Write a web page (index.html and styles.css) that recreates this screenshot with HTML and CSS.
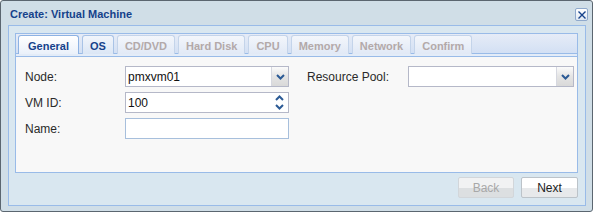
FILE: index.html
```html
<!DOCTYPE html>
<html>
<head>
<meta charset="utf-8">
<link rel="stylesheet" href="styles.css">
</head>
<body>
<div class="win">
  <div class="win-header">
    <span class="win-title">Create: Virtual Machine</span>
    <span class="win-close"><svg width="8" height="8" viewBox="0 0 8 8"><path d="M0.5 0.5 L7.5 7.5 M7.5 0.5 L0.5 7.5" stroke="#15428b" stroke-width="1.4" fill="none"/></svg></span>
  </div>
  <div class="win-body">
    <div class="tabpanel">
      <div class="tabstrip">
        <div class="tab active">General</div>
        <div class="tab">OS</div>
        <div class="tab disabled">CD/DVD</div>
        <div class="tab disabled">Hard Disk</div>
        <div class="tab disabled">CPU</div>
        <div class="tab disabled">Memory</div>
        <div class="tab disabled">Network</div>
        <div class="tab disabled">Confirm</div>
      </div>
      <div class="tab-spacer"></div>
      <div class="panel-body">
        <div class="col col-left">
          <div class="row">
            <label class="lbl">Node:</label>
            <div class="field combo">
              <span class="val">pmxvm01</span>
              <span class="trigger"><svg width="9" height="6" viewBox="0 0 9 6"><polyline points="1,1 4.5,4.5 8,1" stroke="#2b5a95" stroke-width="2" fill="none"/></svg></span>
            </div>
          </div>
          <div class="row">
            <label class="lbl">VM ID:</label>
            <div class="field spinner">
              <span class="val">100</span>
              <span class="spin">
                <svg width="9" height="6" viewBox="0 0 9 6"><polyline points="1,5 4.5,1.5 8,5" stroke="#2b5a95" stroke-width="2" fill="none"/></svg>
                <svg width="9" height="6" viewBox="0 0 9 6"><polyline points="1,1 4.5,4.5 8,1" stroke="#2b5a95" stroke-width="2" fill="none"/></svg>
              </span>
            </div>
          </div>
          <div class="row">
            <label class="lbl">Name:</label>
            <div class="field text"></div>
          </div>
        </div>
        <div class="col col-right">
          <div class="row">
            <label class="lbl lbl-wide">Resource Pool:</label>
            <div class="field combo combo-wide">
              <span class="val"></span>
              <span class="trigger"><svg width="9" height="6" viewBox="0 0 9 6"><polyline points="1,1 4.5,4.5 8,1" stroke="#2b5a95" stroke-width="2" fill="none"/></svg></span>
            </div>
          </div>
        </div>
      </div>
    </div>
    <div class="footer">
      <button class="btn btn-back" disabled>Back</button>
      <button class="btn btn-next">Next</button>
    </div>
  </div>
</div>
</body>
</html>
```
FILE: styles.css
```css
* { box-sizing: border-box; }
html, body { margin: 0; padding: 0; background: #ffffff; }
body { width: 593px; height: 212px; overflow: hidden; font-family: "Liberation Sans", Arial, sans-serif; }

.win {
  width: 593px;
  height: 212px;
  border: 1px solid #5b6670;
  border-radius: 3px;
  background: #d0dee7;
  display: flex;
  flex-direction: column;
}

.win-header {
  height: 24px;
  display: flex;
  align-items: center;
  justify-content: space-between;
  padding: 0 4px 0 9px;
}
.win-title {
  font-weight: bold;
  font-size: 11px;
  color: #15428b;
  padding-top: 2px;
}
.win-close {
  width: 13px;
  height: 13px;
  border: 1px solid #8fa9cc;
  border-radius: 2px;
  background: linear-gradient(#ffffff, #dfe8f3);
  display: flex;
  align-items: center;
  justify-content: center;
  margin-top: 3px;
}

.win-body {
  margin: 0 6px 5px 7px;
  height: 181px;
  border: 1px solid #99bbe8;
  background: #d9e7f0;
  padding: 7px 7px 7px 6px;
  display: flex;
  flex-direction: column;
}

.tabpanel {
  height: 140px;
  border: 1px solid #99bbe8;
  display: flex;
  flex-direction: column;
  background: #f8f8f8;
}

.tabstrip {
  display: flex;
  gap: 3px;
  padding: 1px 2px 0 2px;
  background: linear-gradient(#e6ecf7, #d3e0f4);
  border-bottom: 1px solid #99bbe8;
  height: 20px;
}
.tab {
  height: 19px;
  padding: 1px 7px 0 7px;
  border: 1px solid #a9c3e6;
  border-bottom: none;
  border-radius: 3px 3px 0 0;
  background: linear-gradient(#f1f5fb, #dbe6f5);
  font-size: 11px;
  font-weight: bold;
  color: #15428b;
  display: flex;
  align-items: center;
}
.tab.active {
  background: linear-gradient(#ffffff, #e9f0fa);
  border-color: #8db2e3;
  height: 20px;
  margin-bottom: -1px;
  padding: 1px 9px 0 9px;
}
.tab.disabled {
  color: #b3a9a9;
  border-color: #c4d4ea;
  background: linear-gradient(#f3f6fb, #e1e9f6);
}

.tab-spacer {
  height: 3px;
  background: #e3ecf8;
  border-bottom: 1px solid #99bbe8;
}

.panel-body {
  flex: 1;
  display: flex;
  padding: 9px 0 0 9px;
  background: #f8f8f8;
}

.col { display: flex; flex-direction: column; gap: 5px; }
.col-right { margin-left: 18px; }

.row {
  display: flex;
  align-items: center;
  height: 21px;
}
.lbl {
  width: 100px;
  font-size: 12px;
  color: #2a2a2a;
}
.lbl-wide { width: 101px; }

.field {
  height: 21px;
  width: 164px;
  border: 1px solid #b5b8c8;
  background: #ffffff;
  display: flex;
  align-items: center;
  font-size: 12px;
  color: #111111;
}
.field .val { flex: 1; padding-left: 2px; }
.combo-wide { width: 166px; }
.field.text { border-color: #a7bfdc; }

.trigger {
  width: 17px;
  height: 19px;
  border-left: 1px solid #d6d8e0;
  background: linear-gradient(#fbfbfb, #e4e4e4 50%, #d9d9d9);
  display: flex;
  align-items: center;
  justify-content: center;
}
.spin {
  width: 17px;
  height: 19px;
  display: flex;
  flex-direction: column;
  align-items: center;
  justify-content: space-around;
  padding: 1px 0;
}

.footer {
  display: flex;
  justify-content: flex-end;
  gap: 7px;
  margin-top: 4px;
}
.btn {
  height: 21px;
  font-family: "Liberation Sans", Arial, sans-serif;
  font-size: 12px;
  border-radius: 2px;
  padding: 0;
}
.btn-back {
  width: 56px;
  border: 1px solid #d2d6da;
  background: linear-gradient(#f1f2f3 50%, #dcdfe1 50%);
  color: #a8a8a8;
}
.btn-next {
  width: 57px;
  border: 1px solid #bcc3c9;
  background: linear-gradient(#ffffff 50%, #e7e9eb 50%);
  color: #222222;
}
```
